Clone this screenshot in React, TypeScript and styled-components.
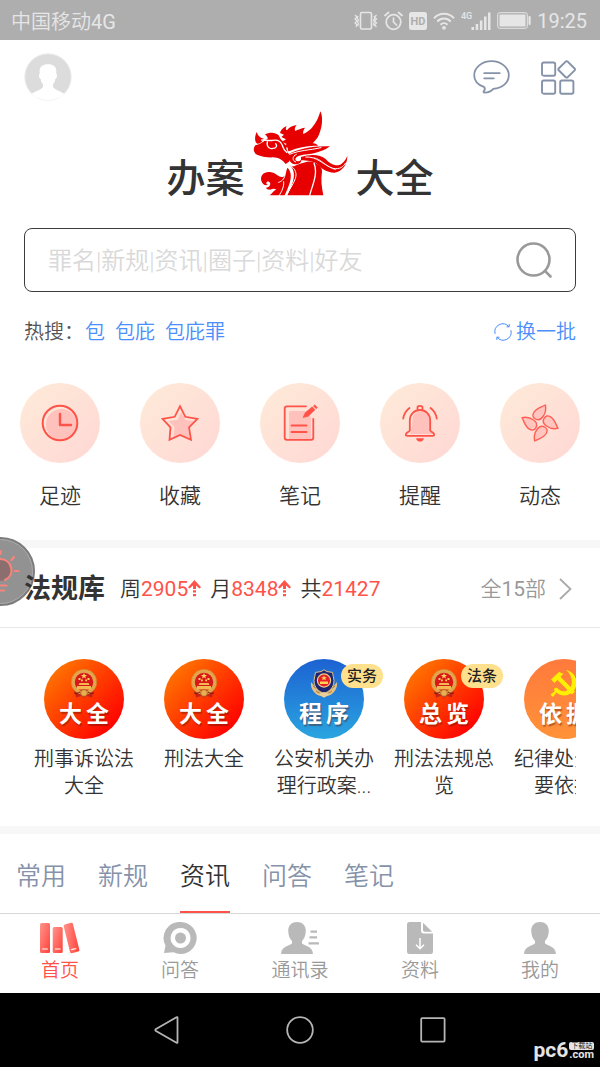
import React from 'react';
import styled, { createGlobalStyle, css } from 'styled-components';

const GlobalStyle = createGlobalStyle`
  *, *::before, *::after { box-sizing: border-box; }
  body {
    margin: 0;
    background: #fff;
    color: #333;
    font-family: Roboto, "Noto Sans CJK SC", sans-serif;
    font-weight: 350;
  }
  button, input { font: inherit; color: inherit; }
  button { margin: 0; padding: 0; border: 0; background: none; cursor: pointer; }
  a { color: inherit; text-decoration: none; }
  svg { display: block; flex: none; }
`;

const Screen = styled.div`
  position: relative;
  display: flex;
  flex-direction: column;
  min-height: 100vh;
  overflow: hidden;
`;

const Latin = styled.span`
  font-weight: 400;
`;

/* ---------- status bar ---------- */

const StatusBar = styled.div`
  display: flex;
  align-items: center;
  justify-content: space-between;
  height: 40px;
  padding: 1px 13px 0 11px;
  background: #aeaeae;
  color: #e6e6e6;
  font-size: 20px;
`;

const StatusIcons = styled.div`
  display: flex;
  align-items: center;
  gap: 6px;
`;

/* ---------- header ---------- */

const Main = styled.main`
  flex: 1;
`;

const Header = styled.header`
  display: flex;
  align-items: center;
  justify-content: space-between;
  padding: 13px 24px 0;
`;

const Avatar = styled.button`
  width: 48px;
  height: 48px;
`;

const HeaderActions = styled.div`
  display: flex;
  align-items: center;
  gap: 31px;
`;

const Logo = styled.h1`
  display: flex;
  align-items: flex-end;
  justify-content: center;
  gap: 8px;
  margin: 10px 0 0;
  font-size: 39px;
  line-height: 34px;
  font-weight: 500;
`;

/* ---------- search ---------- */

const SearchBox = styled.form`
  display: flex;
  align-items: center;
  height: 64px;
  margin: 32px 24px 0;
  padding: 0 22px 0 23px;
  border: 1px solid #3c3c3c;
  border-radius: 8px;
`;

const SearchInput = styled.input`
  flex: 1;
  min-width: 0;
  padding: 2px 0 0;
  border: 0;
  outline: 0;
  background: none;
  font-size: 24px;
  line-height: 32px;
  &::placeholder { color: #d9d9d9; opacity: 1; }
`;

const HotRow = styled.div`
  display: flex;
  align-items: center;
  margin: 26px 24px 0;
  font-size: 20px;
  line-height: 28px;
`;

const HotLabel = styled.span`
  color: #555;
`;

const HotWords = styled.div`
  display: flex;
  flex: 1;
  gap: 10px;
  margin-left: 1px;
  color: #4a8ffb;
`;

const Refresh = styled.button`
  display: flex;
  align-items: center;
  gap: 4px;
  color: #4a8ffb;
`;

/* ---------- quick links ---------- */

const QuickLinks = styled.nav`
  display: grid;
  grid-template-columns: repeat(5, 1fr);
  padding: 37px 0 30px;
`;

const QuickLink = styled.a`
  display: flex;
  flex-direction: column;
  align-items: center;
  gap: 19px;
  font-size: 21px;
  line-height: 28px;
`;

const QuickDisc = styled.span`
  display: grid;
  place-items: center;
  width: 80px;
  height: 80px;
  border-radius: 50%;
  background: linear-gradient(135deg, #fee9d8 10%, #ffd9d5 90%);
`;

const Band = styled.div`
  height: 8px;
  background: #f7f7f7;
`;

/* ---------- law library ---------- */

const Library = styled.section`
  position: relative;
`;

const TipBubble = styled.button`
  position: absolute;
  left: -34px;
  top: -11px;
  width: 69px;
  height: 69px;
`;

const LibraryHead = styled.div`
  position: relative;
  display: flex;
  align-items: center;
  height: 80px;
  padding: 2px 24px 0;
  border-bottom: 1px solid #e8e8e8;
  font-size: 21px;
  line-height: 28px;
`;

const LibraryTitle = styled.h2`
  margin: 0 15px 0 0;
  font-size: 27px;
  line-height: 36px;
  font-weight: 700;
`;

const Stats = styled.div`
  display: flex;
  flex: 1;
  gap: 9px;
`;

const Stat = styled.span`
  display: flex;
  align-items: center;
`;

const Count = styled(Latin)`
  color: #ff5248;
`;

const AllLink = styled.a`
  display: flex;
  align-items: center;
  gap: 12px;
  color: #999;
`;

const BookList = styled.div`
  display: flex;
  margin: 0 24px;
  padding: 31px 0 26px;
  overflow: hidden;
`;

const Book = styled.a`
  display: flex;
  flex: 0 0 120px;
  flex-direction: column;
  align-items: center;
  gap: 7px;
  padding: 0 8px;
  font-size: 20px;
  line-height: 27px;
  text-align: center;
`;

type Tone = 'red' | 'blue' | 'orange';

const tones: Record<Tone, string> = {
  red: 'linear-gradient(135deg, #ff7a00 8%, #ff4000 45%, #ff0000 88%)',
  blue: 'linear-gradient(180deg, #1c62d2, #2aa5e0)',
  orange: 'linear-gradient(180deg, #ff7a3c, #ff9238)',
};

const BookDisc = styled.span<{ $tone: Tone }>`
  position: relative;
  display: flex;
  flex-direction: column;
  align-items: center;
  width: 80px;
  height: 80px;
  padding-top: 10px;
  border-radius: 50%;
  background: ${(p) => tones[p.$tone]};
`;

const BookMark = styled.span`
  display: flex;
  gap: 4px;
  color: #fff;
  font-size: 23px;
  line-height: 32px;
  font-weight: 700;
  text-shadow: 1px 2px 1px rgba(90, 20, 0, 0.4);
`;

const BookBadge = styled.span`
  position: absolute;
  top: 5px;
  left: 57px;
  padding: 0 6px;
  border-radius: 12px;
  background: #ffe08c;
  color: #222;
  font-size: 15px;
  line-height: 24px;
  font-weight: 500;
  white-space: nowrap;
`;

/* ---------- tabs ---------- */

const Tabs = styled.div`
  display: flex;
  gap: 32px;
  height: 80px;
  padding: 0 16px;
  border-bottom: 1px solid #d8d8d8;
`;

const Tab = styled.button<{ $active?: boolean }>`
  height: 79px;
  padding-top: 8px;
  border-bottom: 2px solid transparent;
  color: #8592aa;
  font-size: 25px;
  line-height: 36px;
  ${(p) => p.$active && css`
    border-bottom-color: #ff5248;
    color: #333;
  `}
`;

const BottomBar = styled.nav`
  display: grid;
  grid-template-columns: repeat(5, 1fr);
  height: 79px;
  padding-top: 8px;
`;

const BottomItem = styled.a<{ $active?: boolean }>`
  display: flex;
  flex-direction: column;
  align-items: center;
  gap: 4px;
  color: ${(p) => (p.$active ? '#ff5248' : '#999')};
  font-size: 19px;
  line-height: 26px;
`;

const SystemNav = styled.nav`
  display: flex;
  align-items: center;
  justify-content: center;
  gap: 106px;
  height: 74px;
  background: #000;
`;

const Watermark = styled.div`
  position: absolute;
  right: 6px;
  bottom: 7px;
  display: flex;
  align-items: flex-end;
  gap: 1px;
  color: #e4e4e4;
  font-weight: 700;
`;

const WatermarkName = styled.span`
  font-size: 21px;
  line-height: 20px;
`;

const WatermarkSide = styled.span`
  display: flex;
  flex-direction: column;
  font-size: 11px;
  line-height: 10px;
`;

const WatermarkTag = styled.span`
  border-radius: 2px;
  background: #e4e4e4;
  color: #222;
  font-size: 7px;
  line-height: 8px;
  font-weight: 400;
  text-align: center;
`;

/* ---------- drawings ---------- */

const VibrateIcon = () => (
  <svg width="24" height="20" viewBox="0 0 24 20" fill="none" stroke="currentColor" strokeWidth="1.600">
    <rect x="6.500" y="1.500" width="11" height="16.500" rx="1.500" />
    <path d="M1 4l2 2-2 2 2 2-2 2 2 2-1 2M4 5l-1 2 1.500 2-1 2 1 2-1 2M22.500 4l-2 2 2 2-2 2 2 2-2 2 2 2M20 5l1 2-1.500 2 1 2-1 2 1 2" strokeWidth="1.300" />
  </svg>
);

const AlarmIcon = () => (
  <svg width="19" height="20" viewBox="0 0 19 20" fill="none" stroke="currentColor" strokeWidth="1.700" strokeLinecap="round">
    <circle cx="9.500" cy="11" r="7.300" />
    <path d="M9.500 7v4l3 3M1 4.500L4.500 1.500M18 4.500L14.500 1.500" />
  </svg>
);

const HdIcon = () => (
  <svg width="18" height="18" viewBox="0 0 18 18">
    <rect width="18" height="18" rx="2.500" fill="currentColor" />
    <text x="9" y="13" textAnchor="middle" fontSize="11" fontWeight="700" fill="#aeaeae">HD</text>
  </svg>
);

const WifiIcon = () => (
  <svg width="22" height="18" viewBox="0 0 22 18" fill="none" stroke="currentColor" strokeWidth="2">
    <path d="M1 6.200C6.500.2 15.500.2 21 6.200M4.300 9.500c3.800-4 9.600-4 13.400 0M7.500 12.700c2-2 5-2 7 0" />
    <circle cx="11" cy="15.800" r="1.900" fill="currentColor" stroke="none" />
  </svg>
);

const SignalIcon = () => (
  <svg width="30" height="20" viewBox="0 0 30 20" fill="currentColor">
    <text x="0" y="8" fontSize="9" fontWeight="500">4G</text>
    <rect x="10.500" y="16" width="2.500" height="3" />
    <rect x="14.700" y="13" width="2.500" height="6" />
    <rect x="18.900" y="9.500" width="2.500" height="9.500" />
    <rect x="23" y="5.500" width="2.500" height="13.500" />
    <rect x="27" y="1.500" width="2.500" height="17.500" />
  </svg>
);

const BatteryIcon = () => (
  <svg width="34" height="17" viewBox="0 0 34 17">
    <rect x=".7" y=".7" width="29.600" height="15.600" rx="2" fill="none" stroke="currentColor" strokeWidth="1" />
    <rect x="2.500" y="2.500" width="26" height="12" fill="currentColor" />
    <rect x="31.500" y="4" width="2.200" height="9" rx="1" fill="currentColor" />
  </svg>
);

const AvatarPicture = () => (
  <svg width="48" height="48" viewBox="0 0 48 48">
    <circle cx="24" cy="24" r="23.200" fill="#dcdcdc" stroke="#ececec" />
    <path d="M7.500 41c4-3.200 9.500-4 11.500-7v-3c-1.600-1.300-2-3.200-2.300-5-1.700-.6-2.300-5-.9-5.300C14.800 14.500 18 11.300 24 11.300s9.200 3.200 8.200 9.400c1.400.3.800 4.700-.9 5.300-.3 1.800-.7 3.700-2.300 5v3c2 3 7.500 3.800 11.500 7C31.500 49 16.500 49 7.500 41z" fill="#fff" />
  </svg>
);

const ChatIcon = () => (
  <svg width="37" height="34" viewBox="0 0 37 34" fill="none" stroke="#8592a8" strokeWidth="1.800" strokeLinecap="round" strokeLinejoin="round">
    <path d="M11.300 27.200C5 25 1.200 20.500 1.200 15.300 1.200 7.500 8.900 1.200 18.500 1.200s17.300 6.300 17.300 14.100c0 7.400-6.500 13-15.500 13.500-2 2.200-5 3.600-8.600 3.900-1.400 0-1.500-1-.7-1.800 1-1 1-2.500.3-3.700z" />
    <path d="M11.200 13.200h15.500M11.200 18.300h9.600" />
  </svg>
);

const AppsIcon = () => (
  <svg width="35" height="35" viewBox="0 0 35 35" fill="none" stroke="#8592a8" strokeWidth="1.900" strokeLinejoin="round">
    <rect x="1" y="2.500" width="13.200" height="13.200" rx="1.800" />
    <rect x="1" y="20.500" width="13.200" height="13.200" rx="1.800" />
    <rect x="19.200" y="20.500" width="13.200" height="13.200" rx="1.800" />
    <path d="M24.700 1.600l-7 6.900q-.8.900 0 1.800l7 6.900q1 .8 2 0l6.900-6.900q.8-.9 0-1.800l-6.900-6.900q-1-.8-2 0z" />
  </svg>
);

const DragonMark = () => (
  <svg width="95" height="85" viewBox="280 34 285 255" role="img" aria-label="龙">
    <g fill="#e60000">
      <path d="M482 35C490 48 489 80 478 105 474 115 465 124 459 131 466 130 471 133 475 139 450 136 418 143 390 154L386 155 384 144 371 141 381 133 367 126 379 119 365 112 373 105 361 100C363 92 368 85 381 79 377 86 378 91 382 92 388 83 398 78 411 76 405 83 404 90 407 94 415 90 424 86 436 84 431 91 429 98 431 103 455 94 474 66 482 35z" />
      <path d="M291 97C295 108 300 114 312 117 308 127 301 132 293 132 285 127 284 113 291 97z" />
      <path d="M316 104C328 97 348 97 357 107 360 113 362 118 366 122 376 130 380 145 384 160L392 166 388 186 378 193C368 180 356 174 340 173 322 174 304 170 292 165 279 158 281 144 287 137 298 133 310 130 318 120 325 118 328 116 316 104z" />
      <path d="M388 163C410 148 468 137 511 140 498 150 475 160 444 164 424 166 410 169 407 178 407 185 418 188 424 180 427 187 417 195 405 194 390 190 382 176 388 163z" />
      <path d="M424 172C448 164 480 162 498 178 510 192 532 204 546 192 556 184 560 176 563 168 564 190 550 216 524 219 500 219 485 206 474 194 462 184 440 182 424 182z" />
      <path d="M388 196C398 200 404 202 409 197 430 190 440 184 462 186 480 196 488 204 487 216 483 240 486 262 491 287H383C395 262 418 216 388 196z" />
      <path d="M384 204C404 226 388 258 375 287H330C338 280 342 272 350 270 342 265 340 268 332 270 324 269 320 268 319 264 328 264 334 255 331 249 327 243 320 245 320 250 320 256 324 254 325 251 323 262 309 255 306 246 299 228 313 215 331 217 352 219 354 234 369 232 382 228 377 214 384 204z" />
    </g>
    <g fill="none" stroke="#fff" strokeWidth="3" strokeLinecap="round">
      <path d="M306 121C322 121 330 124 339 122 354 119 362 124 367 135 370 145 373 152 381 158" strokeWidth="4" />
      <path d="M323 126C320 142 330 149 340 146 350 146 354 138 348 132" strokeWidth="4" />
      <path d="M390 164C420 151 450 152 484 144" />
      <path d="M410 164C396 170 398 184 408 187" />
      <path d="M438 172C474 170 490 196 520 206 540 210 550 202 558 190" />
      <path d="M463 174C487 178 500 204 528 210" strokeWidth="2" />
      <path d="M463 190C476 222 458 256 450 287" strokeWidth="4" />
      <path d="M386 194C410 206 414 224 404 244 394 266 384 276 380 288" />
      <path d="M376 226C374 240 364 246 357 248M372 246C374 260 366 276 358 288" />
    </g>
  </svg>
);

const SearchIcon = () => (
  <svg width="37" height="37" viewBox="0 0 37 37" fill="none" stroke="#999" strokeWidth="2.600" strokeLinecap="round">
    <circle cx="17.500" cy="17.500" r="16" />
    <path d="M29.200 29.200l5.300 5.300" />
  </svg>
);

const RefreshIcon = () => (
  <svg width="18" height="18" viewBox="0 0 18 18" fill="none" stroke="currentColor" strokeWidth="1" strokeLinecap="round">
    <path d="M1 10.500A8 8 0 0 1 14.800 3.500M17 7.500A8 8 0 0 1 3.200 14.500M15.200 1.500v2.300h-2.300M2.800 16.500v-2.300h2.300" />
  </svg>
);

const lineProps = { fill: 'none', stroke: '#ff5248', strokeWidth: 1.8 } as const;

const ClockIcon = () => (
  <svg width="38" height="38" viewBox="0 0 38 38">
    <circle cx="20.500" cy="20.500" r="15.500" fill="#ffc1bb" />
    <circle cx="19" cy="19" r="17.300" {...lineProps} strokeWidth="2" />
    <path d="M19 10v11h11" {...lineProps} strokeWidth="2.400" strokeLinecap="round" strokeLinejoin="round" />
  </svg>
);

const StarIcon = () => (
  <svg width="38" height="38" viewBox="0 0 38 38">
    <path d="M20 8l4.500 8 9 1.200-6.500 6 1.500 10.500L20 31l-7.500 2.500 1-10.500-6-6 9-1z" fill="#ffc1bb" />
    <path d="M19 2.200l5.300 10.600 12.200 2-8.500 8.600 2 12.400L19 31l-10.500 4.800 1-12.400-8-8.600 12.200-2z" {...lineProps} strokeLinejoin="miter" />
  </svg>
);

const NoteIcon = () => (
  <svg width="38" height="38" viewBox="0 0 38 38">
    <path d="M10 7h17l3 7v21H8V9q0-2 2-2z" fill="#ffc1bb" />
    <path d="M25 2.300H6q-2.300 0-2.300 2.300v29q0 2.300 2.300 2.300h24q2.300 0 2.300-2.300V15M10.500 21.500h15M10.500 28h15" {...lineProps} strokeLinecap="round" />
    <path d="M22 13.500l2.200-4.700 7-6 2.800 3-6.800 6.500zM32.500 2l1.300-1.200 2.600 2.800-1.300 1.200z" fill="#ff5248" stroke="#ff5248" strokeWidth=".6" />
  </svg>
);

const BellIcon = () => (
  <svg width="38" height="38" viewBox="0 0 38 38">
    <path d="M12 12c4-7 16-5 17.500 4v9l3 5H9l2-7z" fill="#ffc1bb" />
    <path d="M8.800 26.500V16.500C8.800 10 13.500 6 19 6s10.200 4 10.200 10.500v10c.6 1.600 4 1.800 4 4.200 0 .9-.6 1.200-1.500 1.200H6.300c-.9 0-1.500-.3-1.500-1.200 0-2.400 3.400-2.600 4-4.200zM16.500 6V3.500q0-1.700 2.500-1.700t2.500 1.700V6M8.500 4C5 6.500 3 10 2.200 14.500M29.500 4c3.500 2.500 5.500 6 6.300 10.500" {...lineProps} strokeLinecap="round" />
    <path d="M15 34.200h8c-1 4.500-7 4.500-8 0z" fill="#ff5248" />
  </svg>
);

const PinwheelIcon = () => (
  <svg width="38" height="38" viewBox="0 0 38 38">
    <g fill="#ffc6bf" stroke="#ff5f55" strokeWidth="1.400" strokeLinejoin="round">
      {[0, 90, 180, 270].map((angle) => (
        <path
          key={angle}
          d="M24.300 1C25 4 24.500 9 22 12.500 20 15.600 17 16.300 14.500 15 11.500 13.500 11.300 11 12.800 8.500 15.500 4 20 3.500 24.300 1z"
          transform={`rotate(${angle} 19 19)`}
        />
      ))}
    </g>
  </svg>
);

const BulbBubble = () => (
  <svg width="69" height="69" viewBox="0 0 69 69">
    <circle cx="34.500" cy="34.500" r="33.500" fill="#929292" stroke="#7b7b7b" strokeWidth="2" />
    <circle cx="34.500" cy="34.500" r="32" fill="none" stroke="#aaa" strokeWidth="1" />
    <g fill="none" stroke="#f5847d" strokeWidth="2.200" strokeLinecap="round">
      <path d="M30 44C18 39 21 22 34 22S49 38 39 43.500z" fill="#8b6f6e" stroke="none" />
      <path d="M29 43.500C18 38 22 22 34 22S50 38 39 43" />
      <path d="M28 48.500h12.500M31 53.500h7M34.500 14v3M45.500 23l2.500-3M49 34h3.500" />
    </g>
  </svg>
);

const UpArrow = () => (
  <svg width="13" height="17" viewBox="0 0 13 17" fill="#ff5248" aria-label="上升">
    <path d="M6.500 0L13 7.200 11.500 8.500 8 5.500V9H5V5.500L1.500 8.500 0 7.200zM5 10.300h3v2.200H5zM5 14h3v2.200H5z" />
  </svg>
);

const ChevronIcon = () => (
  <svg width="18" height="22" viewBox="0 0 18 22" fill="none" stroke="#aaa" strokeWidth="1.800">
    <path d="M2 1l10.500 10L2 21" />
  </svg>
);

const NationalEmblem = () => (
  <svg width="28" height="30" viewBox="0 0 28 30">
    <path d="M4 20l2 8.500 5-1.500 3 1.800L17 27l5 1.500 2-8.500z" fill="#c62118" />
    <circle cx="14" cy="13" r="11" fill="#d8171b" stroke="#e3a54c" strokeWidth="3.600" />
    <circle cx="14" cy="13" r="12.600" fill="none" stroke="#c27f2a" strokeWidth=".7" strokeDasharray="2 1.500" />
    <path d="M14 4l.9 2h2.200l-1.800 1.400.7 2.200-2-1.300-2 1.300.7-2.200L10.900 6h2.200zM8.500 9h2v2h-2zM17.500 9h2v2h-2zM11 10.500h1.800v1.800H11zM15.300 10.500h1.800v1.800h-1.800z" fill="#ffd257" />
    <path d="M9.500 14h9l1 2h-11zM7 17h14v3.500H7z" fill="#f4b94e" />
    <circle cx="14" cy="24" r="3.400" fill="#e8b052" stroke="#a8541c" strokeWidth=".8" />
    <path d="M4 24c2 1 4 0 6-1M24 24c-2 1-4 0-6-1" fill="none" stroke="#7a1612" strokeWidth="1" />
  </svg>
);

const PoliceEmblem = () => (
  <svg width="28" height="30" viewBox="0 0 28 30">
    <path d="M1 13c-1 7 4 13 10 14l3 1.500 3-1.500c6-1 11-7 10-14l-6 7H7z" fill="#e2c083" />
    <path d="M3 17l7 5M6 22l5 3M25 17l-7 5M22 22l-5 3" stroke="#9a7434" strokeWidth=".9" />
    <path d="M14 .8l3 1.800 5.500.8 1.500 8C24 19 19 22.500 14 24.500 9 22.500 4 19 4 11.400l1.500-8L11 2.600z" fill="#1d2470" stroke="#e2c083" strokeWidth="1" />
    <circle cx="14" cy="11.500" r="6.600" fill="#e3202a" stroke="#f0cf8a" strokeWidth="1.200" />
    <path d="M14 6.500l.8 1.700 1.900.1-1.400 1.200.5 1.800-1.800-1-1.800 1 .5-1.800-1.400-1.200 1.900-.1zM10 12.500h8v2.500h-8z" fill="#ffd257" />
    <path d="M8 25l6-2 6 2-6 3.500z" fill="#e9cf9a" />
  </svg>
);

const PartyEmblem = () => (
  <svg width="28" height="30" viewBox="0 0 28 30">
    <path d="M1 10.500L9 3l4.500 1.800-3 3L25 22.500l-3 3L7.500 11 4.500 14z" fill="#ffef00" />
    <path d="M16 1C27 3 30 17 22 23.500 17 28 10 27 6.500 23.500L3 28 .5 25.500 4.500 22.500 4 19.500 6.500 18.500C11 23.500 17 23 20 19 23.500 14 22 6 16 1z" fill="#ffef00" />
  </svg>
);

const BooksIcon = () => (
  <svg width="40" height="32" viewBox="0 0 40 32">
    <defs>
      <linearGradient id="books" x1="0" y1="0" x2="1" y2="1">
        <stop offset="0" stopColor="#ff958e" />
        <stop offset="1" stopColor="#ff4238" />
      </linearGradient>
    </defs>
    <g fill="url(#books)">
      <rect x="0" y="1" width="10" height="30" rx="1.500" />
      <rect x="12.700" y="5" width="10" height="26" rx="1.500" />
      <rect x="26.700" y="1.200" width="9.600" height="29.600" rx="1.500" transform="rotate(-14 31.500 16)" />
    </g>
    <path d="M2.200 27h5.600M15 27h5.600M31.200 27.700l5-1.200" stroke="#fff" strokeWidth="1.200" />
  </svg>
);

const AnswerIcon = () => (
  <svg width="34" height="32" viewBox="0 0 34 32" fill="#b9b9b9">
    <path fillRule="evenodd" d="M17.500 0a16 16 0 1 1-7 30.300L1 31l1.500-7.500A16 16 0 0 1 17.500 0zm0 6a10 10 0 1 0 .1 0z" />
    <circle cx="17.500" cy="16" r="5.500" />
  </svg>
);

const personPath = 'M16 0c5 0 8.800 3.300 8.800 8.500 0 5-1.800 8.500-3.800 10.500v2.500c2.500 2.500 10.500 2.500 11 10.500H0c.5-8 8.500-8 11-10.500V19c-2-2-3.800-5.500-3.800-10.500C7.200 3.300 11 0 16 0z';

const ContactsIcon = () => (
  <svg width="38" height="32" viewBox="0 0 38 32" fill="#b9b9b9">
    <path d={personPath} />
    <path d="M29.500 8.500H36v2.200h-6.500zM28.500 14.300H36v2.200h-7.500zM27.500 20.200H38v2.200H27.500z" />
  </svg>
);

const FileIcon = () => (
  <svg width="26" height="32" viewBox="0 0 26 32">
    <path d="M2.500 0H14v8.500q0 3 3 3h9v18q0 2.500-2.500 2.500h-21Q0 32 0 29.500v-27Q0 0 2.500 0z" fill="#b9b9b9" />
    <path d="M16 .8V8q0 1.700 1.700 1.700h7.500z" fill="#b9b9b9" />
    <path d="M13 16v10.500M9 22.800l4 4 4-4" fill="none" stroke="#fff" strokeWidth="1.500" />
  </svg>
);

const PersonIcon = () => (
  <svg width="32" height="32" viewBox="0 0 32 32" fill="#b9b9b9">
    <path d={personPath} />
  </svg>
);

const BackIcon = () => (
  <svg width="26" height="28" viewBox="0 0 26 28" fill="none" stroke="#b5b5b5" strokeWidth="1.800" strokeLinejoin="round">
    <path d="M23.500 1.700v24.600q0 1-1 .5L2 15q-1.400-1 0-2L22.500 1.200q1-.5 1 .5z" />
  </svg>
);

const HomeIcon = () => (
  <svg width="28" height="28" viewBox="0 0 28 28" fill="none" stroke="#b5b5b5" strokeWidth="1.800">
    <circle cx="14" cy="14" r="12.800" />
  </svg>
);

const RecentIcon = () => (
  <svg width="26" height="26" viewBox="0 0 26 26" fill="none" stroke="#b5b5b5" strokeWidth="1.800">
    <rect x="1.200" y="1.200" width="23.400" height="23.400" rx="1" />
  </svg>
);

/* ---------- data ---------- */

const quickLinks = [
  { label: '足迹', Icon: ClockIcon },
  { label: '收藏', Icon: StarIcon },
  { label: '笔记', Icon: NoteIcon },
  { label: '提醒', Icon: BellIcon },
  { label: '动态', Icon: PinwheelIcon },
];

const books: { title: string; mark: string; tone: Tone; Emblem: React.FC; badge?: string }[] = [
  { title: '刑事诉讼法大全', mark: '大全', tone: 'red', Emblem: NationalEmblem },
  { title: '刑法大全', mark: '大全', tone: 'red', Emblem: NationalEmblem },
  { title: '公安机关办理行政案...', mark: '程序', tone: 'blue', Emblem: PoliceEmblem, badge: '实务' },
  { title: '刑法法规总览', mark: '总览', tone: 'red', Emblem: NationalEmblem, badge: '法条' },
  { title: '纪律处分主要依据', mark: '依据', tone: 'orange', Emblem: PartyEmblem },
];

const stats = [
  { label: '周', value: '2905', rising: true },
  { label: '月', value: '8348', rising: true },
  { label: '共', value: '21427', rising: false },
];

const tabs = ['常用', '新规', '资讯', '问答', '笔记'];

const bottomItems = [
  { label: '首页', Icon: BooksIcon },
  { label: '问答', Icon: AnswerIcon },
  { label: '通讯录', Icon: ContactsIcon },
  { label: '资料', Icon: FileIcon },
  { label: '我的', Icon: PersonIcon },
];

export default function App() {
  return (
    <Screen>
      <GlobalStyle />
      <StatusBar>
        <span>中国移动<Latin>4G</Latin></span>
        <StatusIcons>
          <VibrateIcon />
          <AlarmIcon />
          <HdIcon />
          <WifiIcon />
          <SignalIcon />
          <BatteryIcon />
          <Latin>19:25</Latin>
        </StatusIcons>
      </StatusBar>

      <Main>
        <Header>
          <Avatar aria-label="个人头像"><AvatarPicture /></Avatar>
          <HeaderActions>
            <button aria-label="消息"><ChatIcon /></button>
            <button aria-label="应用"><AppsIcon /></button>
          </HeaderActions>
        </Header>

        <Logo>
          <span>办案</span>
          <DragonMark />
          <span>大全</span>
        </Logo>

        <SearchBox role="search" onSubmit={(e) => e.preventDefault()}>
          <SearchInput type="text" aria-label="搜索" placeholder="罪名|新规|资讯|圈子|资料|好友" />
          <button type="submit" aria-label="搜索"><SearchIcon /></button>
        </SearchBox>

        <HotRow>
          <HotLabel>热搜：</HotLabel>
          <HotWords>
            {['包', '包庇', '包庇罪'].map((word) => <a href="#search" key={word}>{word}</a>)}
          </HotWords>
          <Refresh><RefreshIcon />换一批</Refresh>
        </HotRow>

        <QuickLinks>
          {quickLinks.map(({ label, Icon }) => (
            <QuickLink href="#quick" key={label}>
              <QuickDisc><Icon /></QuickDisc>
              {label}
            </QuickLink>
          ))}
        </QuickLinks>

        <Band />

        <Library>
          <TipBubble aria-label="提示"><BulbBubble /></TipBubble>
          <LibraryHead>
            <LibraryTitle>法规库</LibraryTitle>
            <Stats>
              {stats.map(({ label, value, rising }) => (
                <Stat key={label}>
                  {label}
                  <Count>{value}</Count>
                  {rising && <UpArrow />}
                </Stat>
              ))}
            </Stats>
            <AllLink href="#all">
              <span>全<Latin>15</Latin>部</span>
              <ChevronIcon />
            </AllLink>
          </LibraryHead>
          <BookList>
            {books.map(({ title, mark, tone, Emblem, badge }) => (
              <Book href="#book" key={title}>
                <BookDisc $tone={tone}>
                  <Emblem />
                  <BookMark>
                    {mark.split('').map((char) => <span key={char}>{char}</span>)}
                  </BookMark>
                  {badge && <BookBadge>{badge}</BookBadge>}
                </BookDisc>
                {title}
              </Book>
            ))}
          </BookList>
        </Library>

        <Band />

        <Tabs role="tablist">
          {tabs.map((label) => (
            <Tab role="tab" key={label} aria-selected={label === '资讯'} $active={label === '资讯'}>{label}</Tab>
          ))}
        </Tabs>
      </Main>

      <BottomBar>
        {bottomItems.map(({ label, Icon }, index) => (
          <BottomItem href="#tab" key={label} $active={index === 0}>
            <Icon />
            {label}
          </BottomItem>
        ))}
      </BottomBar>

      <SystemNav>
        <button aria-label="返回"><BackIcon /></button>
        <button aria-label="主屏幕"><HomeIcon /></button>
        <button aria-label="最近任务"><RecentIcon /></button>
      </SystemNav>

      <Watermark>
        <WatermarkName>pc6</WatermarkName>
        <WatermarkSide>
          <WatermarkTag>下载站</WatermarkTag>
          .com
        </WatermarkSide>
      </Watermark>
    </Screen>
  );
}
